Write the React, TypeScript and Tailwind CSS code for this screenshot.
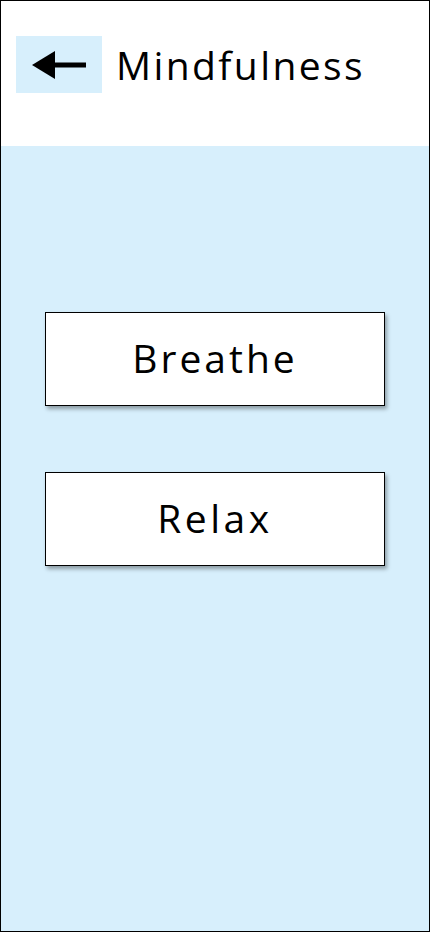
import React from "react";

export default function App() {
  const font = { fontFamily: '"Open Sans", "Noto Sans", sans-serif' };
  return (
    <div className="w-[430px] h-[932px] border border-black flex flex-col bg-[#d7effc]" style={font}>
      <div className="h-[145px] bg-white flex items-center pl-[15px] pb-[18px] shrink-0">
        <button className="w-[86px] h-[57px] bg-[#d7effc] flex items-center justify-center">
          <svg width="54" height="30" viewBox="0 0 54 30">
            <polygon points="0,15 23,1 23,29" fill="#000" />
            <rect x="20" y="12.5" width="34" height="5" fill="#000" />
          </svg>
        </button>
        <span className="ml-[14px] text-[39px] leading-none text-black tracking-[2.4px]">Mindfulness</span>
      </div>
      <div className="flex flex-col items-center pt-[166px] gap-[66px]">
        <button className="w-[340px] h-[94px] bg-white border border-black shadow-[2px_3px_4px_rgba(0,0,0,0.35)] text-[39px] text-black leading-none tracking-[3px] flex items-center justify-center pb-[3px]">
          Breathe
        </button>
        <button className="w-[340px] h-[94px] bg-white border border-black shadow-[2px_3px_4px_rgba(0,0,0,0.35)] text-[39px] text-black leading-none tracking-[3.5px] flex items-center justify-center pb-[3px]">
          Relax
        </button>
      </div>
    </div>
  );
}
